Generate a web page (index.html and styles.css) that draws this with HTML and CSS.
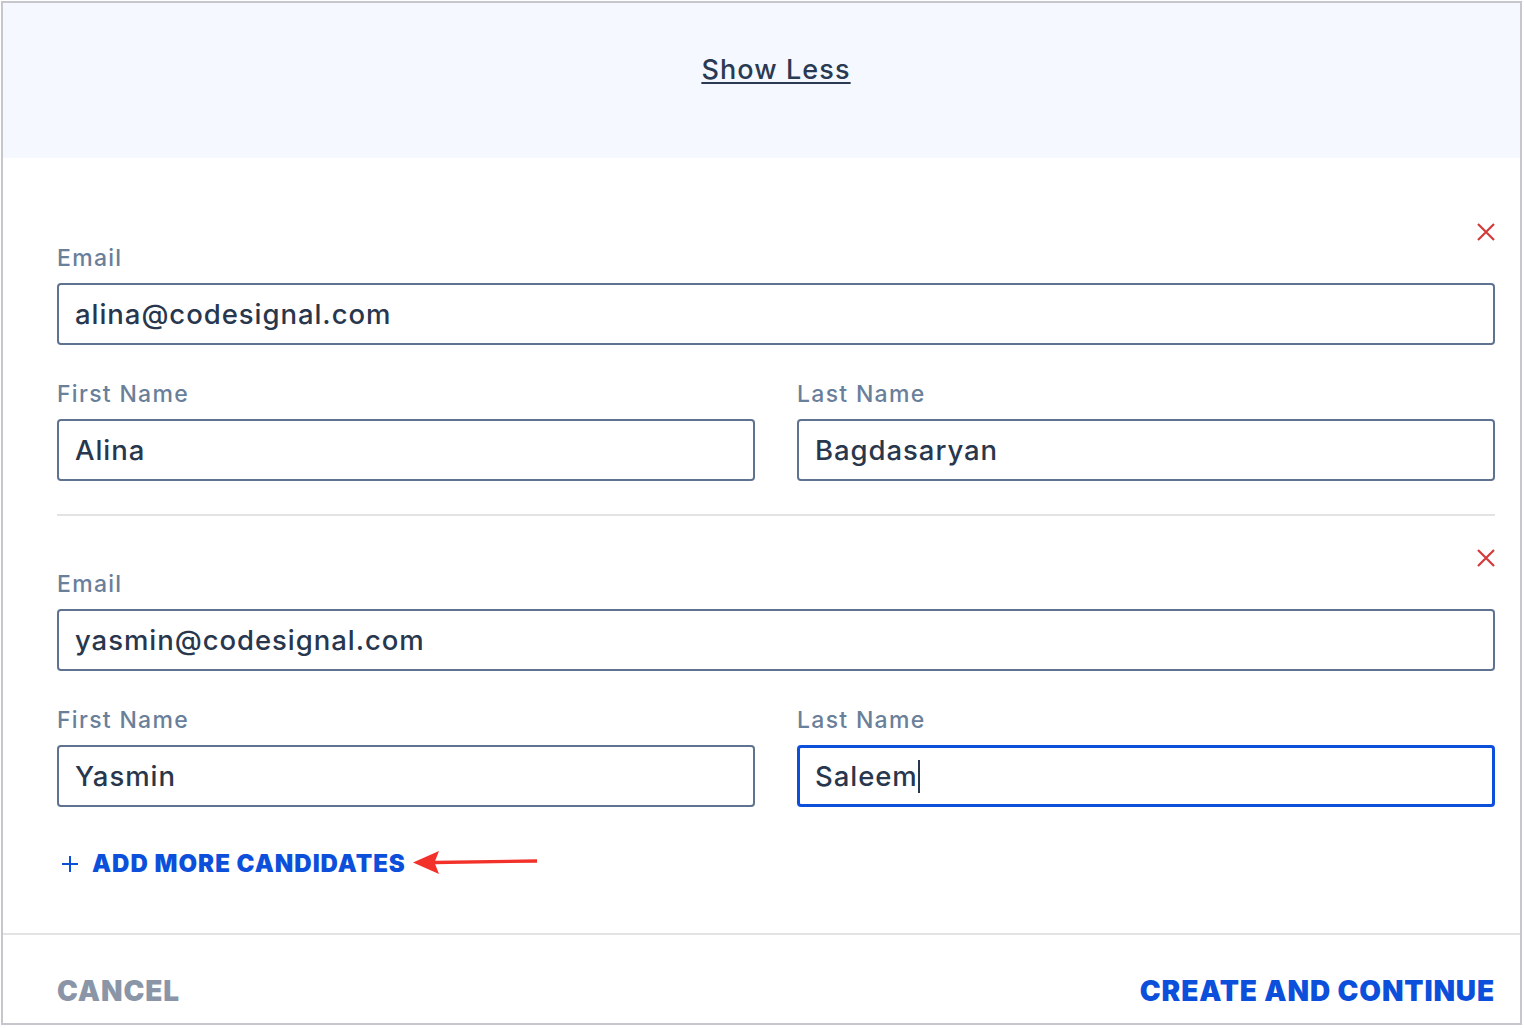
FILE: index.html
```html
<!DOCTYPE html>
<html lang="en">
<head>
<meta charset="utf-8">
<title>Add Candidates</title>
<link rel="stylesheet" href="styles.css">
</head>
<body>
<div class="modal">
  <div class="band">
    <a class="show-less" href="#">Show Less</a>
  </div>
  <div class="content">
    <div class="cand">
      <div class="cand-head">
        <svg class="remove" width="18" height="18" viewBox="0 0 18 18"><path d="M1 1L17 17M17 1L1 17" stroke="#d33a3a" stroke-width="2.2" fill="none"/></svg>
      </div>
      <div class="label">Email</div>
      <div class="field">alina@codesignal.com</div>
      <div class="row">
        <div class="col">
          <div class="label">First Name</div>
          <div class="field">Alina</div>
        </div>
        <div class="col">
          <div class="label">Last Name</div>
          <div class="field">Bagdasaryan</div>
        </div>
      </div>
    </div>
    <div class="divider"></div>
    <div class="cand">
      <div class="cand-head">
        <svg class="remove" width="18" height="18" viewBox="0 0 18 18"><path d="M1 1L17 17M17 1L1 17" stroke="#d33a3a" stroke-width="2.2" fill="none"/></svg>
      </div>
      <div class="label">Email</div>
      <div class="field">yasmin@codesignal.com</div>
      <div class="row">
        <div class="col">
          <div class="label">First Name</div>
          <div class="field">Yasmin</div>
        </div>
        <div class="col">
          <div class="label">Last Name</div>
          <div class="field focused">Saleem<span class="caret"></span></div>
        </div>
      </div>
    </div>
    <div class="add-more">
      <svg class="plus" width="16" height="18" viewBox="0 0 16 18"><path d="M8 1V17M0 9H16" stroke="#0c4fdb" stroke-width="2" fill="none"/></svg>
      <span class="add-text">ADD MORE CANDIDATES</span>
      <svg class="arrow" width="132" height="30" viewBox="0 0 132 30"><path d="M24 14.5L127 13" stroke="#f2322a" stroke-width="3.4" fill="none"/><polygon points="3,14.5 29,3 24.5,14.5 29,26" fill="#f2322a"/></svg>
    </div>
  </div>
  <div class="footer">
    <a class="btn-cancel" href="#">CANCEL</a>
    <a class="btn-create" href="#">CREATE AND CONTINUE</a>
  </div>
</div>
</body>
</html>
```
FILE: styles.css
```css
* { box-sizing: border-box; }
html, body { margin: 0; padding: 0; background: #ffffff; }
body { font-family: "Inter", "DejaVu Sans", sans-serif; color: #28374d; }

.modal {
  margin: 1px 0 0 1px;
  width: 1521px;
  border: 2px solid #c6c7cc;
  background: #ffffff;
}

.band {
  height: 155px;
  background: #f5f8fe;
  padding: 52px 25px 0 54px;
  text-align: center;
}
.show-less {
  font-size: 27px;
  font-weight: 500;
  line-height: 30px;
  letter-spacing: 1.1px;
  color: #2a3a52;
  text-decoration: underline;
  text-decoration-thickness: 2px;
  text-underline-offset: 3px;
}

.content {
  padding: 65px 25px 54px 54px;
}

.cand-head {
  height: 18px;
  display: flex;
  justify-content: flex-end;
  margin-bottom: 4px;
}
.remove { display: block; }

.label {
  font-size: 23px;
  font-weight: 500;
  line-height: 26px;
  letter-spacing: 1.3px;
  color: #6a7f9a;
  margin-bottom: 12px;
}

.field {
  height: 62px;
  border: 2px solid #5f7391;
  border-radius: 4px;
  padding: 0 16px;
  display: flex;
  align-items: center;
  font-size: 27.5px;
  font-weight: 500;
  letter-spacing: 0.95px;
  color: #28374d;
}
.field.focused {
  border: 3px solid #0c4fdb;
  padding: 0 15px;
}
.caret {
  display: inline-block;
  width: 2px;
  height: 33px;
  background: #28374d;
  margin-left: 0;
}

.row {
  display: grid;
  grid-template-columns: 1fr 1fr;
  gap: 42px;
  margin-top: 36px;
}

.divider {
  height: 2px;
  background: #e3e3e3;
  margin: 33px 0;
}

.add-more {
  position: relative;
  margin-top: 42px;
  height: 30px;
  display: flex;
  align-items: center;
}
.plus { margin-left: 5px; margin-right: 14px; }
.add-text {
  font-size: 24px;
  font-weight: 900;
  letter-spacing: 1px;
  line-height: 30px;
  color: #0c4fdb;
}
.arrow {
  position: absolute;
  left: 353px;
  top: -1px;
}

.footer {
  border-top: 2px solid #e3e3e3;
  padding: 41px 25px 17px 54px;
  display: flex;
  justify-content: space-between;
  line-height: 30px;
}
.footer a {
  font-size: 28px;
  font-weight: 900;
  letter-spacing: 0.88px;
  text-decoration: none;
}
.btn-cancel { color: #8a96a8; }
.btn-create { color: #0c4fdb; }
```
